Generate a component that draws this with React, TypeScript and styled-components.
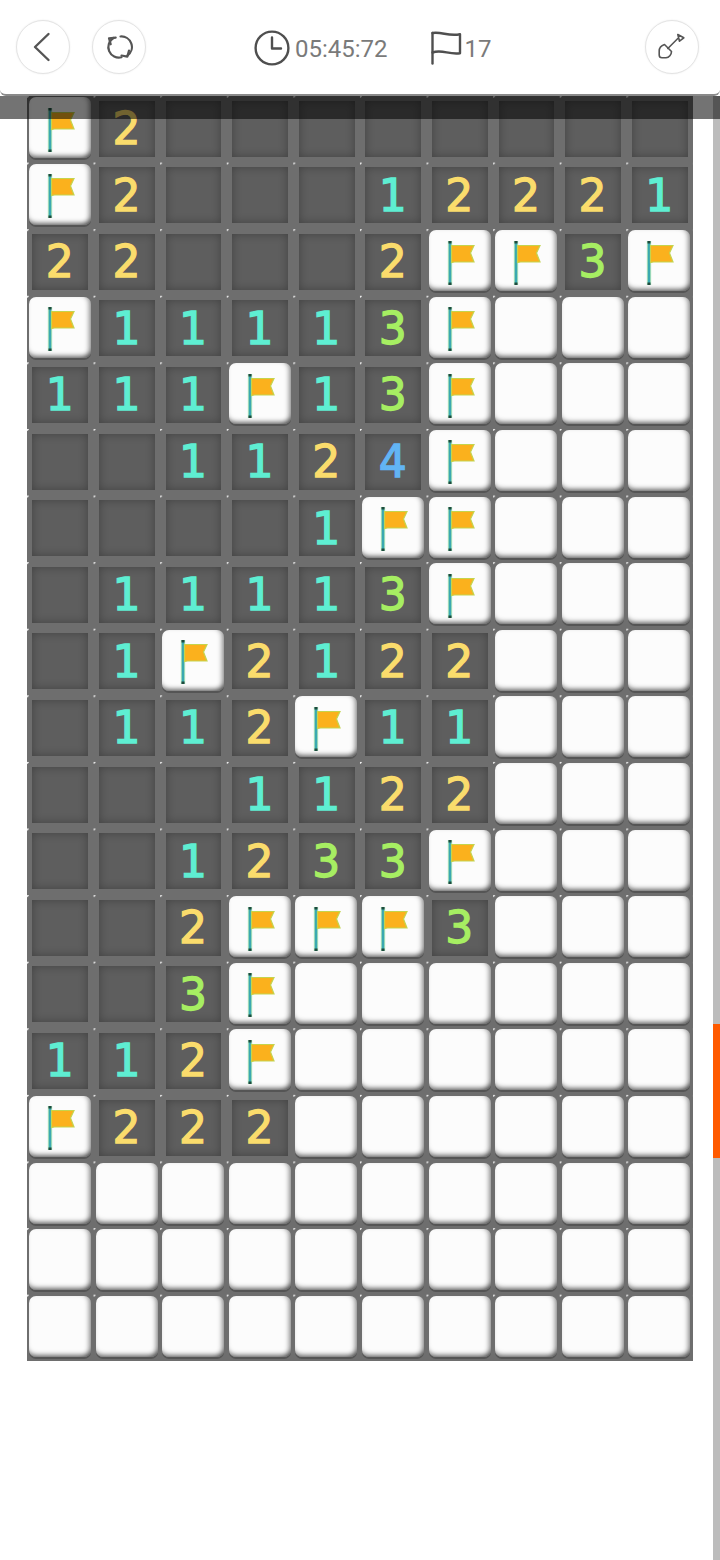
import styled, { createGlobalStyle } from 'styled-components';

const GlobalStyle = createGlobalStyle`
  html, body {
    margin: 0;
    padding: 0;
    background: #fff;
    font-family: Roboto, "Liberation Sans", sans-serif;
  }
`;

const Page = styled.div`
  position: relative;
  width: 720px;
  height: 1560px;
  overflow: hidden;
  background: #fff;
`;

const Header = styled.header`
  position: relative;
  z-index: 2;
  box-sizing: border-box;
  height: 96px;
  margin-bottom: -0.4px;
  padding: 0 21px 0 16px;
  display: flex;
  align-items: center;
  background: #fff;
  border-bottom: 2px solid #8a8a8a;
  border-radius: 0 0 6px 6px;
`;

const CircleButton = styled.button<{ $gap?: number }>`
  flex-shrink: 0;
  width: 54px;
  height: 54px;
  margin-left: ${(p) => p.$gap ?? 0}px;
  padding: 0;
  display: flex;
  align-items: center;
  justify-content: center;
  background: #fff;
  border: 1px solid #e4e4e4;
  border-radius: 50%;
  box-shadow: 0 0 2px rgba(0, 0, 0, 0.08);
`;

const Status = styled.div`
  margin-left: 108px;
  padding-top: 2px;
  display: flex;
  align-items: center;
`;

const StatusText = styled.span<{ $gap: number }>`
  margin-left: ${(p) => p.$gap}px;
  margin-top: 2px;
  font-size: 24px;
  color: #7a7a7a;
`;

const FlagCount = styled.div`
  margin-left: 42px;
  display: flex;
  align-items: center;
`;

const RightButton = styled(CircleButton)`
  margin-left: auto;
`;

const Band = styled.div`
  position: absolute;
  z-index: 1;
  top: 96px;
  left: 0;
  width: 100%;
  height: 23px;
  background: rgba(0, 0, 0, 0.55);
`;

const Board = styled.main`
  width: 666px;
  margin-left: 27px;
  display: grid;
  grid-template-columns: repeat(10, 66.6px);
  grid-auto-rows: 66.6px;
  background-color: #6e6e6e;
  background-image: radial-gradient(circle at 0 0, #f4f4f4 1.4px, transparent 2.2px);
  background-size: 66.6px 66.6px;
`;

const Cell = styled.div`
  box-sizing: border-box;
  display: flex;
  align-items: center;
  justify-content: center;
`;

const OpenCell = styled(Cell)<{ $color?: string }>`
  margin: 5px 5.4px 5.6px;
  padding: 1px 1px 0 0;
  background: #5e5e5e;
  box-shadow: inset 0 0 10px rgba(0, 0, 0, 0.3);
  font-family: "DejaVu Sans", Verdana, sans-serif;
  font-size: 44px;
  line-height: 1;
  -webkit-text-stroke: 1.3px ${(p) => p.$color ?? '#fff'};
  color: ${(p) => p.$color ?? '#fff'};
`;

const Tile = styled(Cell)`
  margin: 1.4px 2.6px 4.2px 2px;
  background: #fcfcfc;
  border-radius: 7px;
  box-shadow:
    0 2px 0 #555,
    inset -4px -1px 5px -2px rgba(0, 0, 0, 0.42),
    inset 0 -5px 5px -3px rgba(0, 0, 0, 0.5);
`;

const FlagSvg = styled.svg`
  margin: 4px 0 0 4px;
`;

const Scrollbar = styled.div`
  position: absolute;
  top: 96px;
  right: 0;
  bottom: 0;
  width: 7px;
  background: #bcbcbc;
`;

const ScrollThumb = styled.div`
  position: absolute;
  top: 928px;
  left: 0;
  width: 100%;
  height: 134px;
  background: #ff5a00;
`;

const NUMBER_COLORS: Record<string, string> = {
  '1': '#5eeed2',
  '2': '#fadc6c',
  '3': '#a6ee62',
  '4': '#62b4f4',
};

// F flag, # closed, . open and empty, digit open with a count
const ROWS = [
  'F2........',
  'F2...12221',
  '22...2FF3F',
  'F11113F###',
  '111F13F###',
  '..1124F###',
  '....1FF###',
  '.11113F###',
  '.1F2122###',
  '.112F11###',
  '...1122###',
  '..1233F###',
  '..2FFF3###',
  '..3F######',
  '112F######',
  'F222######',
  '##########',
  '##########',
  '##########',
];

function FlagMark() {
  return (
    <FlagSvg width="30" height="46" viewBox="0 0 30 46" fill="none">
      <path d="M3 1V45" stroke="#a8e6a4" strokeWidth="4.4" opacity="0.7" />
      <path d="M3 1V45" stroke="#3aa9b0" strokeWidth="2.6" />
      <path d="M3 1V3.5M3 42.5V45" stroke="#1f4a3c" strokeWidth="3" />
      <path
        d="M4.5 5.5H27L23.5 13L27 22H7.5L4.5 22.5Z"
        fill="#fbb11d"
        stroke="#c4d44e"
        strokeWidth="1.2"
      />
    </FlagSvg>
  );
}

function BackIcon() {
  return (
    <svg width="20" height="30" viewBox="0 0 20 30" fill="none">
      <path d="M15.5 2L2 15L15.5 28" stroke="#555" strokeWidth="2.4" strokeLinecap="round" strokeLinejoin="round" />
    </svg>
  );
}

function ResetIcon() {
  return (
    <svg width="28" height="28" viewBox="0 0 28 28" fill="none" stroke="#555" strokeWidth="2.2" strokeLinecap="round" strokeLinejoin="round">
      <path d="M8.5 5A10.5 10.5 0 0 0 16.5 24.2" />
      <path d="M4 5.3L10.7 4.7M4 5.3L5.7 11.3" />
      <path d="M15.5 3.5A10.5 10.5 0 0 1 22.5 22.5" />
      <path d="M24 17.5L22.3 23.7L16.5 22.5" />
    </svg>
  );
}

function ClockIcon() {
  return (
    <svg width="36" height="36" viewBox="0 0 36 36" fill="none" stroke="#4f4f4f" strokeWidth="2.4" strokeLinecap="round" strokeLinejoin="round">
      <circle cx="18" cy="18" r="16.4" />
      <path d="M18 7.5V18.5H27" />
    </svg>
  );
}

function PennantIcon() {
  return (
    <svg width="32" height="34" viewBox="0 0 32 34" fill="none" stroke="#4f4f4f" strokeWidth="2.4" strokeLinecap="round" strokeLinejoin="round">
      <path d="M2.5 2V32.5" />
      <path d="M2.5 2C12 0.5 18 5.5 30 3.2V22.2C19 24 12 18 2.5 21.5" />
    </svg>
  );
}

function ShovelIcon() {
  return (
    <svg width="28" height="30" viewBox="0 0 28 30" fill="none" stroke="#555" strokeWidth="1.6" strokeLinecap="round" strokeLinejoin="round">
      <path d="M9.8 16.5L19.8 6.5" />
      <path d="M19.8 2.5L25.8 5.8L21.5 9.2Z" />
      <path d="M6.5 12.5L13.5 19.5C13.5 22.5 11 25.5 8 25.7L4 25.7C2.5 25.7 1.2 24.5 1.2 23L1.2 19C1.2 16 3.5 13.5 6.5 12.5Z" />
    </svg>
  );
}

function BoardCell({ value }: { value: string }) {
  if (value === 'F') {
    return (
      <Tile>
        <FlagMark />
      </Tile>
    );
  }
  if (value === '#') return <Tile />;
  return <OpenCell $color={NUMBER_COLORS[value]}>{value === '.' ? '' : value}</OpenCell>;
}

export default function App() {
  return (
    <Page>
      <GlobalStyle />
      <Header>
        <CircleButton type="button" aria-label="Back">
          <BackIcon />
        </CircleButton>
        <CircleButton type="button" aria-label="Restart" $gap={22}>
          <ResetIcon />
        </CircleButton>
        <Status>
          <ClockIcon />
          <StatusText $gap={5}>05:45:72</StatusText>
          <FlagCount>
            <PennantIcon />
            <StatusText $gap={3}>17</StatusText>
          </FlagCount>
        </Status>
        <RightButton type="button" aria-label="Dig">
          <ShovelIcon />
        </RightButton>
      </Header>
      <Band />
      <Board>
        {ROWS.flatMap((row, r) =>
          row.split('').map((value, c) => <BoardCell key={`${r}-${c}`} value={value} />),
        )}
      </Board>
      <Scrollbar>
        <ScrollThumb />
      </Scrollbar>
    </Page>
  );
}
